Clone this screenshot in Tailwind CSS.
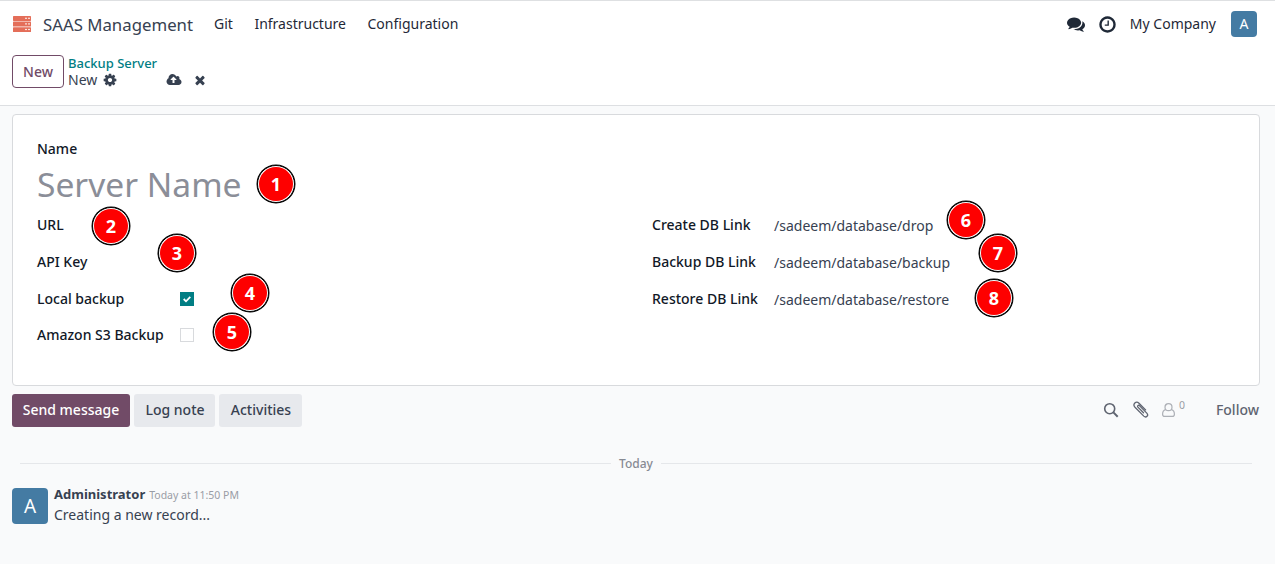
<!DOCTYPE html>
<html lang="en">
<head>
<meta charset="utf-8">
<title>SAAS Management - Backup Server</title>
<script src="https://cdn.jsdelivr.net/npm/@tailwindcss/browser@4"></script>
</head>
<body class="relative h-[564px] w-[1275px] overflow-hidden bg-[#f9fafb] font-['Noto_Sans',sans-serif] text-sm leading-[21px] text-[#374151]">

<header class="flex h-[47px] items-center border-t border-[#dee0e2] bg-white pl-3 pr-[18px] text-[#1f2937]">
  <svg class="mr-[11px] h-5 w-5" viewBox="0 0 20 20">
    <g fill="#e46e59"><rect x="1" y="2" width="18" height="4.9" rx=".6"/><rect x="1" y="7.600" width="18" height="4.900" rx=".6"/><rect x="1" y="13.200" width="18" height="4.900" rx=".6"/></g>
    <g fill="#fbe3de"><rect x="13" y="3.700" width="2" height="1.200"/><rect x="16" y="3.700" width="2" height="1.200"/><rect x="13" y="9.300" width="2" height="1.200"/><rect x="16" y="9.300" width="2" height="1.200"/><rect x="13" y="14.900" width="2" height="1.200"/><rect x="16" y="14.900" width="2" height="1.200"/></g>
  </svg>
  <span class="mr-[21px] text-[16.800px] text-[#374151]">SAAS Management</span>
  <nav class="flex gap-[21.500px] pb-0.5"><a>Git</a><a>Infrastructure</a><a>Configuration</a></nav>
  <div class="ml-auto flex items-center">
    <svg class="mr-[14px] h-[18px] w-[18px]" viewBox="0 0 1792 1792" fill="#1f2937"><path d="M1408 768q0 139-94 257t-256.500 186.500-353.500 68.500q-86 0-176-16-124 88-278 128-36 9-86 16h-3q-11 0-20.500-8t-11.500-21q-1-3-1-6.500t.5-6.500 2-6l2.500-5 3.500-5.500 4-5 4.500-5 4-4.500q5-6 23-25t26-29.500 22.500-29 25-38.500 20.500-44q-124-72-195-177t-71-224q0-139 94-257t256.500-186.500 353.500-68.500 353.500 68.500 256.500 186.500 94 257zm384 256q0 120-71 224.500t-195 176.500q10 24 20.500 44t25 38.500 22.500 29 26 29.500 23 25q1 1 4 4.500t4.500 5 4 5 3.500 5.500l2.500 5 2 6 .5 6.500-1 6.500q-3 14-13 22t-22 7q-50-7-86-16-154-40-278-128-90 16-176 16-271 0-472-132 58 4 88 4 161 0 309-45t264-129q125-92 192-212t67-254q0-77-23-152 129 71 204 178t75 230z"/></svg>
    <svg class="mr-[14px] h-[17px] w-[17px]" viewBox="100 100 1592 1592" fill="#1f2937"><path d="M1024 544v448q0 14-9 23t-23 9h-320q-14 0-23-9t-9-23v-64q0-14 9-23t23-9h224v-352q0-14 9-23t23-9h64q14 0 23 9t9 23zm416 352q0-148-73-273t-198-198-273-73-273 73-198 198-73 273 73 273 198 198 273 73 273-73 198-198 73-273zm224 0q0 209-103 385.500t-279.500 279.500-385.500 103-385.500-103-279.500-279.500-103-385.500 103-385.500 279.500-279.500 385.500-103 385.500 103 279.500 279.500 103 385.500z"/></svg>
    <span class="mr-[15px] pb-0.5">My Company</span>
    <span class="grid h-[26px] w-[26px] place-items-center rounded bg-[#447ba3] pb-0.5 text-white">A</span>
  </div>
</header>

<div class="flex h-[59px] items-start border-b border-[#dddfe2] bg-white pl-3 pt-2">
  <button class="mr-1 h-[33px] w-[52px] rounded border border-[#714b67] font-medium text-[#714b67]">New</button>
  <div class="flex flex-col text-sm leading-[17px]">
    <a class="text-[13px] font-medium text-[#017e84]">Backup Server</a>
    <div class="-mt-px flex items-center">
      <span class="mr-1.5">New</span>
      <svg class="mr-[49px] h-[14px] w-[14px]" viewBox="50 50 1692 1692" fill="#374151"><path d="M1152 896q0-106-75-181t-181-75-181 75-75 181 75 181 181 75 181-75 75-181zm512-109v222q0 12-8 23t-20 13l-185 28q-19 54-39 91 35 50 107 138 10 12 10 25t-9 23q-27 37-99 108t-94 71q-12 0-26-9l-138-108q-44 23-91 38-16 136-29 186-7 28-36 28h-222q-14 0-24.500-8.500t-11.500-21.500l-28-184q-49-16-90-37l-141 107q-10 9-25 9-14 0-25-11-126-114-165-168-7-10-7-23 0-12 8-23 15-21 51-66.500t54-70.500q-27-50-41-99l-183-27q-13-2-21-12.500t-8-23.500v-222q0-12 8-23t19-13l186-28q14-46 39-92-40-57-107-138-10-12-10-24 0-10 9-23 26-36 98.500-107.500t94.500-71.500q13 0 26 10l138 107q44-23 91-38 16-136 29-186 7-28 36-28h222q14 0 24.500 8.500t11.500 21.500l28 184q49 16 90 37l142-107q9-9 24-9 13 0 25 10 129 119 165 170 7 8 7 22 0 12-8 23-15 21-51 66.500t-54 70.500q26 50 41 98l183 28q13 2 21 12.500t8 23.500z"/></svg>
      <svg class="mr-[11px] h-[14px] w-4" viewBox="-64 0 1920 1792" fill="#374151"><path d="M1216 864q0-14-9-23l-352-352q-9-9-23-9t-23 9l-351 351q-10 12-10 24 0 14 9 23t23 9h224v352q0 13 9.500 22.500t22.500 9.500h192q13 0 22.500-9.500t9.500-22.500v-352h224q13 0 22.500-9.500t9.500-22.500zm640 288q0 159-112.500 271.500t-271.500 112.500h-1088q-185 0-316.500-131.500t-131.500-316.500q0-130 70-240t188-165q-2-30-2-43 0-212 150-362t362-150q156 0 285.500 87t188.500 231q71-62 166-62 106 0 181 75t75 181q0 76-41 138 130 31 213.500 135.500t83.500 238.500z"/></svg>
      <svg class="h-[14px] w-[14px]" viewBox="0 0 1792 1792" fill="#374151"><path d="M1490 1322q0 40-28 68l-136 136q-28 28-68 28t-68-28l-294-294-294 294q-28 28-68 28t-68-28l-136-136q-28-28-28-68t28-68l294-294-294-294q-28-28-28-68t28-68l136-136q28-28 68-28t68 28l294 294 294-294q28-28 68-28t68 28l136 136q28 28 28 68t-28 68l-294 294 294 294q28 28 28 68z"/></svg>
    </div>
  </div>
</div>

<main class="ml-3 mt-2 h-[272px] w-[1248px] rounded border border-[#d8dadd] bg-white px-6 pt-[23px]">
  <div class="font-medium text-[#111827]">Name</div>
  <div class="h-[55px] text-[33.600px] leading-[51px] text-[#8b8e98]">Server Name</div>
  <div class="grid grid-cols-[615px_1fr]">
    <div class="grid grid-cols-[143px_auto] grid-rows-[37px_37px_36px_36px] font-medium text-[#111827]">
      <span>URL</span><span></span>
      <span>API Key</span><span></span>
      <span>Local backup</span>
      <span class="mt-[4px] grid h-[14px] w-[14px] place-items-center bg-[#017e84]"><svg class="h-2.5 w-2.5" viewBox="0 0 10 10" fill="none" stroke="#fff" stroke-width="1.800"><path d="M1.700 5l2.300 2.300 4.300-4.400"/></svg></span>
      <span>Amazon S3 Backup</span>
      <span class="mt-[4px] h-[14px] w-[14px] border border-[#d8dadd] bg-white"></span>
    </div>
    <div class="grid auto-rows-[37px] grid-cols-[122px_auto]">
      <span class="font-medium text-[#111827]">Create DB Link</span><span class="pt-px">/sadeem/database/drop</span>
      <span class="font-medium text-[#111827]">Backup DB Link</span><span class="pt-px">/sadeem/database/backup</span>
      <span class="font-medium text-[#111827]">Restore DB Link</span><span class="pt-px">/sadeem/database/restore</span>
    </div>
  </div>
</main>

<section class="ml-3 mt-2 w-[1248px]">
  <div class="flex h-[33px] items-center gap-1 font-medium">
    <button class="h-[33px] w-[118px] rounded-[3px] bg-[#714b67] pb-0.5 text-white">Send message</button>
    <button class="h-[33px] w-[81px] rounded-[3px] bg-[#e7e9ed] pb-0.5 pl-px">Log note</button>
    <button class="h-[33px] w-[83px] rounded-[3px] bg-[#e7e9ed] pb-0.5 pl-px">Activities</button>
    <div class="ml-auto flex items-center pb-0.5 pr-px text-[#5f6470]">
      <svg class="mr-[14px] h-4 w-4" viewBox="0 0 16 16" fill="none" stroke="#5f6470"><circle cx="6.700" cy="6.700" r="5" stroke-width="1.600"/><path d="M10.400 10.400l4.300 4.300" stroke-width="2"/></svg>
      <svg class="mr-[13px] h-[17px] w-4" viewBox="0 0 16 17" fill="none" stroke="#5f6470" stroke-width="1.300" stroke-linecap="round"><path d="M10.500 11.800L4.900 6.100c-1-1 .5-2.500 1.500-1.500l7.400 7.500c2.200 2.400-.7 5.200-3 3L2 6.300C-.8 3.300 3 -.6 6 2.200l6.600 6.700"/></svg>
      <svg class="mr-1 h-[14px] w-[13px]" viewBox="0 0 13 14" fill="none" stroke="#adb0b6" stroke-width="1.200"><circle cx="6.500" cy="4.200" r="3.500"/><path d="M3.500 6.600C1.200 7.200.6 9 .6 11.200c0 1.500.8 2.200 2 2.200h7.800c1.200 0 2-.7 2-2.200 0-2.200-.6-4-2.900-4.600"/></svg>
      <span class="-mt-[9px] mr-[31px] text-[10.500px] font-normal text-[#9a9da5]">0</span>
      <span>Follow</span>
    </div>
  </div>
  <div class="mx-2 mt-[26px] flex h-[21px] items-center gap-2 text-xs font-medium text-[#878a93]">
    <span class="h-px flex-1 bg-[#e5e7ea]"></span><span>Today</span><span class="h-px flex-1 bg-[#e5e7ea]"></span>
  </div>
  <div class="mt-[14px] flex gap-1.5">
    <div class="grid h-9 w-9 place-items-center rounded bg-[#447ba3] text-[19px] text-white">A</div>
    <div class="-mt-1">
      <div class="flex h-5 items-baseline gap-1"><b class="text-[13px]">Administrator</b><span class="text-[10.500px] text-[#9a9da5]">Today at 11:50 PM</span></div>
      <div>Creating a new record...</div>
    </div>
  </div>
</section>

<!-- Numbered callouts -->
<div class="text-[18px] font-bold text-white">
  <div class="absolute left-[257px] top-[165px] grid h-[38px] w-[38px] place-items-center rounded-full border border-black bg-white p-px shadow-[0_0_0_0.500px_#000]"><span class="grid h-full w-full place-items-center rounded-full bg-[#fe0000]">1</span></div>
  <div class="absolute left-[92px] top-[207px] grid h-[38px] w-[38px] place-items-center rounded-full border border-black bg-white p-px shadow-[0_0_0_0.500px_#000]"><span class="grid h-full w-full place-items-center rounded-full bg-[#fe0000]">2</span></div>
  <div class="absolute left-[158px] top-[234px] grid h-[38px] w-[38px] place-items-center rounded-full border border-black bg-white p-px shadow-[0_0_0_0.500px_#000]"><span class="grid h-full w-full place-items-center rounded-full bg-[#fe0000]">3</span></div>
  <div class="absolute left-[231px] top-[274px] grid h-[38px] w-[38px] place-items-center rounded-full border border-black bg-white p-px shadow-[0_0_0_0.500px_#000]"><span class="grid h-full w-full place-items-center rounded-full bg-[#fe0000]">4</span></div>
  <div class="absolute left-[213px] top-[313px] grid h-[38px] w-[38px] place-items-center rounded-full border border-black bg-white p-px shadow-[0_0_0_0.500px_#000]"><span class="grid h-full w-full place-items-center rounded-full bg-[#fe0000]">5</span></div>
  <div class="absolute left-[947px] top-[201px] grid h-[38px] w-[38px] place-items-center rounded-full border border-black bg-white p-px shadow-[0_0_0_0.500px_#000]"><span class="grid h-full w-full place-items-center rounded-full bg-[#fe0000]">6</span></div>
  <div class="absolute left-[979px] top-[234px] grid h-[38px] w-[38px] place-items-center rounded-full border border-black bg-white p-px shadow-[0_0_0_0.500px_#000]"><span class="grid h-full w-full place-items-center rounded-full bg-[#fe0000]">7</span></div>
  <div class="absolute left-[975px] top-[279px] grid h-[38px] w-[38px] place-items-center rounded-full border border-black bg-white p-px shadow-[0_0_0_0.500px_#000]"><span class="grid h-full w-full place-items-center rounded-full bg-[#fe0000]">8</span></div>
</div>
</body>
</html>
